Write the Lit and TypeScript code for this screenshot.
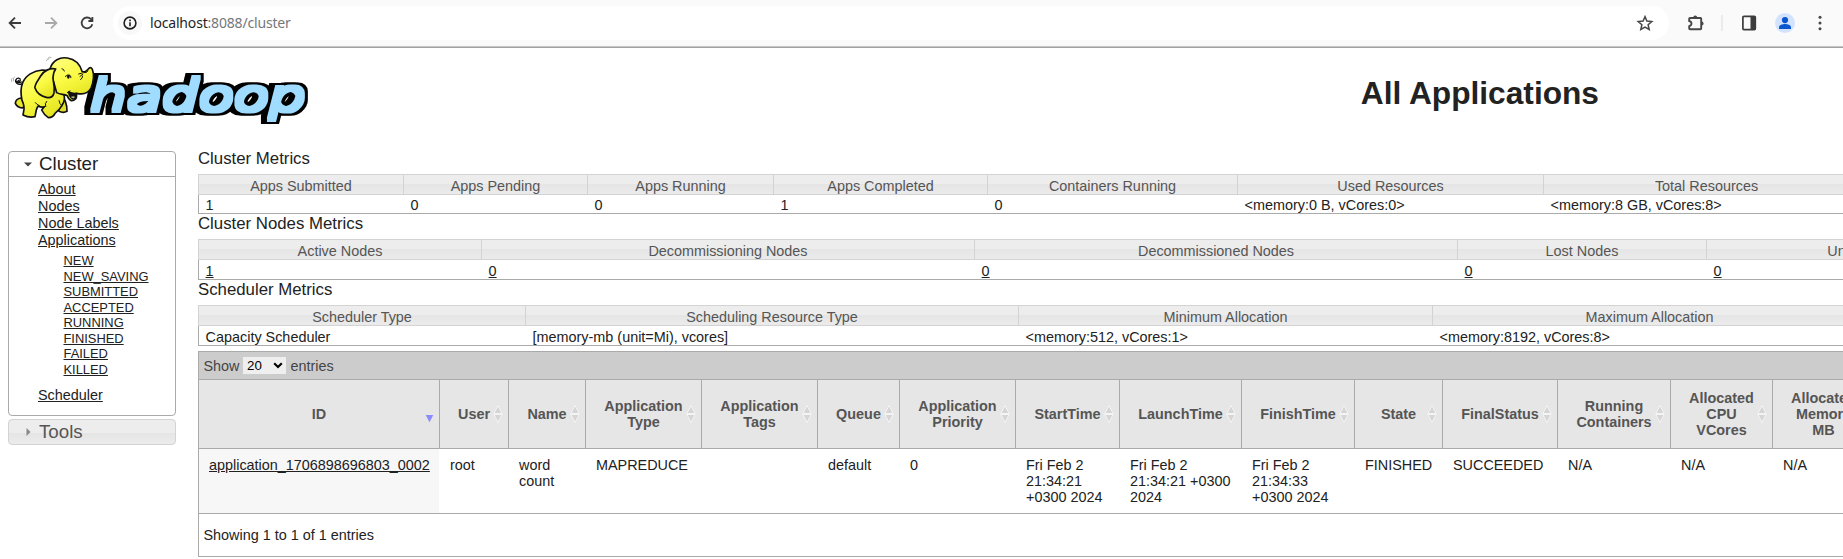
import { LitElement, html, css } from "lit";
import { customElement, property } from "lit/decorators.js";
import { classMap } from "lit/directives/class-map.js";
import { styleMap } from "lit/directives/style-map.js";

type Col = { w: number; head: string; val: string; link?: boolean };

const clusterMetrics: Col[] = [
  { w: 205, head: "Apps Submitted", val: "1" },
  { w: 184, head: "Apps Pending", val: "0" },
  { w: 186, head: "Apps Running", val: "0" },
  { w: 214, head: "Apps Completed", val: "1" },
  { w: 250, head: "Containers Running", val: "0" },
  { w: 306, head: "Used Resources", val: "<memory:0 B, vCores:0>" },
  { w: 326, head: "Total Resources", val: "<memory:8 GB, vCores:8>" },
];
const nodeMetrics: Col[] = [
  { w: 283, head: "Active Nodes", val: "1", link: true },
  { w: 493, head: "Decommissioning Nodes", val: "0", link: true },
  { w: 483, head: "Decommissioned Nodes", val: "0", link: true },
  { w: 249, head: "Lost Nodes", val: "0", link: true },
  { w: 352, head: "Unhealthy Nodes", val: "0", link: true },
];
const schedulerMetrics: Col[] = [
  { w: 327, head: "Scheduler Type", val: "Capacity Scheduler" },
  { w: 493, head: "Scheduling Resource Type", val: "[memory-mb (unit=Mi), vcores]" },
  { w: 414, head: "Minimum Allocation", val: "<memory:512, vCores:1>" },
  { w: 434, head: "Maximum Allocation", val: "<memory:8192, vCores:8>" },
];

const appCols: { w: number; head: string[]; val: string[] }[] = [
  { w: 241, head: ["ID"], val: ["application_1706898696803_0002"] },
  { w: 69, head: ["User"], val: ["root"] },
  { w: 77, head: ["Name"], val: ["word", "count"] },
  { w: 116, head: ["Application", "Type"], val: ["MAPREDUCE"] },
  { w: 116, head: ["Application", "Tags"], val: [] },
  { w: 82, head: ["Queue"], val: ["default"] },
  { w: 116, head: ["Application", "Priority"], val: ["0"] },
  { w: 104, head: ["StartTime"], val: ["Fri Feb 2", "21:34:21", "+0300 2024"] },
  { w: 122, head: ["LaunchTime"], val: ["Fri Feb 2", "21:34:21 +0300", "2024"] },
  { w: 113, head: ["FinishTime"], val: ["Fri Feb 2", "21:34:33", "+0300 2024"] },
  { w: 88, head: ["State"], val: ["FINISHED"] },
  { w: 115, head: ["FinalStatus"], val: ["SUCCEEDED"] },
  { w: 113, head: ["Running", "Containers"], val: ["N/A"] },
  { w: 102, head: ["Allocated", "CPU", "VCores"], val: ["N/A"] },
  { w: 102, head: ["Allocated", "Memory", "MB"], val: ["N/A"] },
];

const lines = (parts: string[]) => parts.map((p) => html`<div>${p}</div>`);
const px = (w: number) => styleMap({ width: `${w}px` });

@customElement("browser-bar")
class BrowserBar extends LitElement {
  static styles = css`
    :host { display: block; background: #fafafa; border-bottom: 1px solid #a2a2a2; box-shadow: inset 0 -1px #c6c6c6; height: 47px; }
    .bar { display: flex; align-items: center; height: 46px; }
    .nav { display: flex; align-items: center; gap: 16px; padding-left: 5px; width: 113px; box-sizing: border-box; }
    svg { display: block; flex: none; }
    .pill { display: flex; align-items: center; width: 1556px; height: 34px; border-radius: 17px; background: #fff; box-sizing: border-box; padding: 0 14px 0 5px; }
    .info { width: 24px; height: 24px; border-radius: 12px; background: #f8f8f8; display: grid; place-items: center; }
    .url { font: 14px/20px "Noto Sans", sans-serif; margin-left: 8px; flex: 1; color: #75777b; white-space: pre; letter-spacing: -0.18px; }
    .host { color: #1f1f1f; }
    .tools { display: flex; align-items: center; padding-left: 17px; }
    .sep { width: 2px; height: 16px; background: #ebebeb; margin: 0 17px 0 15px; }
    .user { margin: 0 16px 0 17px; }
  `;
  render() {
    return html`<div class="bar">
      <div class="nav">
        <svg width="20" height="20" viewBox="0 0 20 20" fill="none" stroke="#3c3c3c" stroke-width="1.8"><path d="M16 10H5M10 4.6 4.6 10l5.4 5.4" /></svg>
        <svg width="20" height="20" viewBox="0 0 20 20" fill="none" stroke="#a9a9a9" stroke-width="1.8"><path d="M4 10h11M10 4.6l5.4 5.4-5.4 5.4" /></svg>
        <svg width="20" height="20" viewBox="0 0 20 20" fill="none" stroke="#3c3c3c" stroke-width="1.8"><path d="M15.3 11.2A5.4 5.4 0 1 1 14 6.2l1.2 1.3" /><path d="M15.4 4v4h-4" /></svg>
      </div>
      <div class="pill">
        <div class="info"><svg width="14" height="14" viewBox="0 0 14 14" fill="none" stroke="#1f1f1f" stroke-width="1.6"><circle cx="7" cy="7" r="5.9" /><path d="M7 6.3v4M7 3.6v1.6" /></svg></div>
        <div class="url"><span class="host">localhost</span>:8088/cluster</div>
        <svg width="20" height="20" viewBox="0 0 20 20" fill="none" stroke="#474747" stroke-width="1.5"><path d="M10 3.6l1.9 4.5 4.9.4-3.7 3.2 1.1 4.8-4.2-2.5-4.2 2.5 1.1-4.8-3.7-3.2 4.9-.4z" /></svg>
      </div>
      <div class="tools">
        <svg width="20" height="20" viewBox="0 0 20 20"><path d="M4 5h10.4q.8 0 .8.8v9.6q0 .8-.8.8H4q-.8 0-.8-.8v-2.2c3-.6 3-4.6 0-5.2V5.8q0-.8.8-.8z" fill="none" stroke="#474747" stroke-width="1.9" /><path d="M7.2 4.600a2 2 0 0 1 4 0zM15.600 8.500a2 2 0 0 1 0 4z" fill="#474747" /></svg>
        <div class="sep"></div>
        <svg width="18" height="18" viewBox="0 0 18 18"><rect x="2.900" y="2.400" width="12.400" height="13.200" rx="1" fill="none" stroke="#3c3c3c" stroke-width="1.700" /><path d="M10.500 2h5v14h-5z" fill="#3c3c3c" /></svg>
        <svg class="user" width="20" height="20" viewBox="0 0 20 20"><circle cx="10" cy="10" r="10" fill="#d3e3fd" /><circle cx="10" cy="7.100" r="3.100" fill="#0b57d0" /><path d="M4 16v-1.800c0-2 3.500-3.100 6-3.100s6 1.100 6 3.100V16z" fill="#0b57d0" /></svg>
        <svg width="20" height="20" viewBox="0 0 20 20" fill="#474747"><circle cx="9" cy="4.200" r="1.500" /><circle cx="9" cy="10" r="1.500" /><circle cx="9" cy="15.800" r="1.500" /></svg>
      </div>
    </div>`;
  }
}

@customElement("hadoop-logo")
class HadoopLogo extends LitElement {
  static styles = css`
    :host { display: block; }
    svg { display: block; overflow: visible; }
    .word { font: italic 134px "DejaVu Sans", sans-serif; }
  `;
  render() {
    return html`<svg width="310" height="84" viewBox="0 0 930 252">
      <defs>
        <linearGradient id="skin" x1="0" y1="0" x2="0.5" y2="1"><stop offset="0" stop-color="#ffff86" /><stop offset="0.55" stop-color="#fafa44" /><stop offset="1" stop-color="#e6e624" /></linearGradient>
        <filter id="slab" filterUnits="userSpaceOnUse" x="200" y="40" width="730" height="212" color-interpolation-filters="sRGB">
          <feMorphology in="SourceGraphic" operator="dilate" radius="7 6" result="face" />
          <feMorphology in="SourceAlpha" operator="dilate" radius="14 13" result="edge" />
          <feOffset in="edge" dx="-10" dy="1" result="deep" />
          <feMerge><feMergeNode in="deep" /><feMergeNode in="edge" /><feMergeNode in="face" /></feMerge>
        </filter>
      </defs>
      <text class="word" x="256" y="190" textLength="646" lengthAdjust="spacingAndGlyphs" fill="#9fdcff" filter="url(#slab)">hadoop</text>
      <g stroke="#111" stroke-width="5" stroke-linejoin="round" stroke-linecap="round" fill="url(#skin)">
        <path d="M50 108C38 112 29 103 33 95C36 88 46 89 46 96C45 101 40 101 40 97M49 102C44 105 38 104 36 100" fill="none" stroke-width="4" />
        <path d="M158 178L162 190Q175 196 186 190Q187 176 181 160L174 145Z" fill="#e0e02a" />
        <path d="M48 150Q32 152 31 166Q36 178 52 180L62 172Z" fill="#e9e92c" />
        <path d="M112 66C85 68 62 82 53 104C45 124 48 143 51 157C56 168 60 176 56 190L54 201Q72 210 90 206L94 186Q97 176 100 174Q110 180 118 176L110 186Q116 199 130 209Q145 208 150 196Q163 186 169 175Q180 160 178 146L160 70Z" />
        <path d="M135 62C143 37 165 26 187 30C212 34 225 49 231 70C238 76 246 68 253 60Q258 56 262 64C268 78 266 103 258 120C250 136 233 140 215 136L214 149Q210 158 199 158Q190 155 187 143C176 137 166 141 155 134Z" />
        <path d="M191 132Q204 138 213 136Q216 150 204 152Q194 149 191 132Z" fill="#111" />
        <path d="M197 148Q204 142 211 148Q205 153 197 148Z" fill="#e6e9a0" stroke-width="1" />
        <path d="M152 63C137 59 117 67 107 84C99 98 88 109 90 120C96 137 110 145 124 148C134 150 144 147 147 135C151 116 143 100 144 88C145 78 148 68 152 63Z" />
        <path d="M122 176Q118 166 125 160M171 174Q163 168 162 158M103 173Q95 170 91 164" fill="none" stroke-width="3" />
        <path d="M181 85Q188 77 195 84M192 80Q200 84 198 89M171 62Q176 62 178 69M187 134L195 129M249 69Q243 76 238 74M221 78L232 75M225 85L234 78M227 95Q233 90 233 84" fill="none" stroke-width="3" />
        <ellipse cx="190" cy="86" rx="4" ry="6" fill="#111" stroke="none" />
        <path d="M124 38Q127 31 132 32M129 30Q133 26 138 28M20 101Q17 94 21 91M26 99Q23 91 28 87" fill="none" stroke="#888" stroke-width="2" />
      </g>
    </svg>`;
  }
}

@customElement("side-nav")
class SideNav extends LitElement {
  static styles = css`
    :host { display: block; width: 168px; }
    .panel { border: 1px solid #aaa; border-radius: 4px; height: 263px; }
    .title { display: flex; align-items: center; height: 24px; font-size: 18.72px; line-height: 24px; padding-left: 13px; color: #212121; }
    .title svg { width: 12px; margin-right: 5px; flex: none; }
    .open { border-bottom: 1px solid #aaa; }
    .tools { border: 1px solid #d3d3d3; border-radius: 4px; margin-top: 3px; color: #555; background: linear-gradient(#ededed 0 54%, #e5e5e5 54%, #ebebeb); }
    .links { padding: 4px 0 0 29px; line-height: 17px; }
    .sub { padding-left: 25.500px; margin: 4px 0 10px; font-size: 12.9px; line-height: 15.500px; }
    a { text-decoration: underline; color: #212121; }
  `;
  render() {
    const states = ["NEW", "NEW_SAVING", "SUBMITTED", "ACCEPTED", "RUNNING", "FINISHED", "FAILED", "KILLED"];
    return html`
      <div class="panel">
        <div class="title open"><svg height="12" viewBox="0 0 12 12"><path d="M2 4.500h8L6 8.500z" fill="#454545" /></svg>Cluster</div>
        <div class="links">
          ${["About", "Nodes", "Node Labels", "Applications"].map((t) => html`<div><a>${t}</a></div>`)}
          <div class="sub">${states.map((t) => html`<div><a>${t}</a></div>`)}</div>
          <div><a>Scheduler</a></div>
        </div>
      </div>
      <div class="title tools"><svg height="12" viewBox="0 0 12 12"><path d="M4.500 2v8l4-4z" fill="#888" /></svg>Tools</div>
    `;
  }
}

@customElement("metrics-table")
class MetricsTable extends LitElement {
  @property() heading = "";
  @property({ attribute: false }) cols: Col[] = [];
  @property({ type: Boolean }) tight = false;
  static styles = css`
    :host { display: block; }
    h3 { margin: 0; font-size: 16.800px; font-weight: normal; line-height: 19px; height: 25px; color: #222; }
    .row { display: flex; width: max-content; }
    .th, .td { box-sizing: border-box; flex: none; white-space: nowrap; }
    .th { height: 21px; border: 1px solid #d3d3d3; border-right: 0; padding-top: 3px; text-align: center; color: #555; background: linear-gradient(#ededed 0 48%, #e5e5e5 48%, #ebebeb); }
    .body { border-left: 1px solid #aaa; border-bottom: 1px solid #aaa; }
    .td { height: 19px; padding: 3px 0 0 7.600px; color: #212121; }
    .td:first-child { margin-left: -1px; }
    .tight .td { height: 18px; padding-top: 2px; }
    .link { text-decoration: underline; }
  `;
  render() {
    return html`<h3>${this.heading}</h3>
      <div class="row">${this.cols.map((c) => html`<div class="th" style=${px(c.w)}>${c.head}</div>`)}</div>
      <div class=${classMap({ row: true, body: true, tight: this.tight })}>
        ${this.cols.map((c) => html`<div class="td" style=${px(c.w)}><span class=${classMap({ link: !!c.link })}>${c.val}</span></div>`)}
      </div>`;
  }
}

@customElement("apps-table")
class AppsTable extends LitElement {
  static styles = css`
    :host { display: block; width: max-content; margin-top: 5px; border: 1px solid #aaa; }
    .bar { display: flex; align-items: center; height: 27px; background: #ccc; border-bottom: 1px solid #aaa; padding-left: 4.500px; color: #444; }
    .select { display: flex; align-items: center; justify-content: space-between; width: 43px; height: 17px; box-sizing: border-box; background: #efefef; color: #000; font-size: 13.333px; padding: 0 3px 0 4px; margin: 0 4.500px 0 3.500px; }
    .row { display: flex; border-bottom: 1px solid #aaa; margin-left: -1px; }
    .th, .td { box-sizing: border-box; flex: none; white-space: nowrap; border-left: 1px solid #aaa; }
    .th { position: relative; display: flex; flex-direction: column; justify-content: center; text-align: center; height: 68px; background: #e6e6e6; color: #555; font-weight: bold; }
    .sort { position: absolute; right: 5px; top: 25px; }
    .td { height: 64px; padding: 8px 0 0 10px; border-left-color: transparent; color: #212121; }
    .td:first-child { background: #f7f7f7; border-left-color: #aaa; text-decoration: underline; }
    .foot { height: 42px; line-height: 42px; padding-left: 4.500px; color: #222; }
  `;
  render() {
    return html`
      <div class="bar">Show<div class="select">20<svg width="10" height="7" viewBox="0 0 10 7"><path d="M1.200 1.200 5 5l3.800-3.800" fill="none" stroke="#000" stroke-width="2.100" /></svg></div>entries</div>
      <div class="row">
        ${appCols.map((c, i) => html`<div class="th" style=${px(c.w)}>${lines(c.head)}${i === 0
          ? html`<svg class="sort" width="9" height="18" viewBox="0 0 9 18"><path d="M.7 10h7.600L4.500 17.300z" fill="#8b8bff" /></svg>`
          : html`<svg class="sort" width="10" height="18" viewBox="0 0 10 18" fill="#d6d6d6" stroke="#f6f6f6" stroke-width=".9"><path d="M.9 8.500 5 .5l4.100 8zM.9 9.500 5 17.500l4.100-8z" /></svg>`}</div>`)}
      </div>
      <div class="row">${appCols.map((c) => html`<div class="td" style=${px(c.w)}>${lines(c.val)}</div>`)}</div>
      <div class="foot">Showing 1 to 1 of 1 entries</div>
    `;
  }
}

@customElement("app-root")
class AppRoot extends LitElement {
  static styles = css`
    :host { display: block; width: 1843px; height: 559px; overflow: hidden; background: #fff; font: 14.4px/16px "Liberation Sans", Arial, sans-serif; color: #222; }
    .head { display: flex; justify-content: space-between; height: 101px; box-sizing: border-box; padding: 0 244px 0 5px; }
    h1 { margin: 27px 0 0; font-size: 31.680px; line-height: 36px; font-weight: bold; color: #222; }
    .main { display: grid; grid-template-columns: 190px 1645px; padding-left: 8px; }
    side-nav { margin-top: 2px; }
    .content { overflow: hidden; }
  `;
  render() {
    return html`<browser-bar></browser-bar>
      <div class="head"><hadoop-logo></hadoop-logo><h1>All Applications</h1></div>
      <div class="main">
        <side-nav></side-nav>
        <div class="content">
          <metrics-table heading="Cluster Metrics" .cols=${clusterMetrics} tight></metrics-table>
          <metrics-table heading="Cluster Nodes Metrics" .cols=${nodeMetrics}></metrics-table>
          <metrics-table heading="Scheduler Metrics" .cols=${schedulerMetrics}></metrics-table>
          <apps-table></apps-table>
        </div>
      </div>`;
  }
}
